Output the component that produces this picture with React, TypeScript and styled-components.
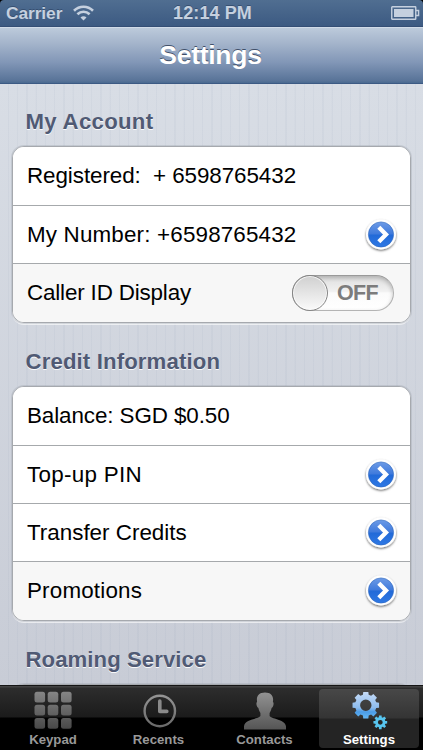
import React from "react";
import styled, { createGlobalStyle } from "styled-components";

const Global = createGlobalStyle`
  * { box-sizing: border-box; }
  body { margin: 0; background: #000; font-family: "Liberation Sans", Arial, Helvetica, sans-serif; }
`;

const Screen = styled.div`
  width: 423px;
  height: 750px;
  display: flex;
  flex-direction: column;
  overflow: hidden;
  background: #000;
`;

const StatusBar = styled.header`
  flex: none;
  height: 27px;
  display: grid;
  grid-template-columns: 1fr auto 1fr;
  align-items: center;
  padding: 0 4px 1px 6px;
  border-radius: 4px 4px 0 0;
  background: linear-gradient(#506e91, #3c5a82);
  border-bottom: 1px solid #344e75;
  color: #c5d0df;
  font-size: 18px;
  font-weight: bold;
  line-height: 24px;
  text-shadow: 0 -1px 0 rgba(30, 50, 80, 0.45);
`;

const Carrier = styled.div`
  display: flex;
  align-items: center;
  gap: 11px;
  font-size: 17.4px;
  letter-spacing: -0.1px;
`;

const Clock = styled.div`
  letter-spacing: 0.1px;
`;

const BatterySlot = styled.div`
  display: flex;
  justify-content: flex-end;
  margin-right: -1px;
`;

const NavBar = styled.div`
  flex: none;
  height: 57px;
  border-top: 1px solid #d0dbe8;
  border-bottom: 1px solid #3c5a84;
  background: linear-gradient(#bccadb 0%, #a4b4cb 28%, #8297b7 62%, #587398 96%, #496990 100%);
  display: flex;
  align-items: center;
  justify-content: center;
`;

const Title = styled.h1`
  margin: 0;
  padding: 0 2px 2px 0;
  font-size: 26.6px;
  line-height: 54px;
  color: #fff;
  letter-spacing: -0.3px;
  text-shadow: 0 -1px 0 rgba(40, 55, 80, 0.8);
`;

const Content = styled.main`
  flex: 1;
  min-height: 0;
  overflow: hidden;
  padding: 0 12px;
  background:
    repeating-linear-gradient(90deg, transparent 0 7.6px, rgba(110,130,160,0.06) 8px 9px, transparent 9.25px),
    linear-gradient(#d8dde5, #c8ccd6);
`;

const SectionTitle = styled.h2<{ $h: number; $track: number }>`
  margin: 0;
  height: ${(p) => p.$h}px;
  padding: 0 0 0 13.5px;
  display: flex;
  align-items: flex-end;
  font-size: 22.2px;
  line-height: 48px;
  letter-spacing: ${(p) => p.$track}px;
  color: #505a74;
  text-shadow: 0 1px 0 rgba(255, 255, 255, 0.9);
`;

const Card = styled.section`
  border: 1px solid #a6a9ae;
  border-radius: 12px;
  background: #fff;
  overflow: hidden;
  box-shadow: 0 0 0 1px rgba(150, 155, 165, 0.3), 0 2px 0 rgba(255, 255, 255, 0.6);
`;

const Row = styled.div<{ $tint?: boolean }>`
  height: 58px;
  padding: 0 11px 0 14px;
  display: flex;
  align-items: center;
  justify-content: space-between;
  background: ${(p) => (p.$tint ? "#f7f7f7" : "#fff")};
  font-size: 22.4px;
  color: #000;
  white-space: pre;
  & + & { border-top: 1px solid #a6a9ac; }
  &:last-child { height: 59px; }
`;

const Label = styled.span<{ $track?: number }>`
  letter-spacing: ${(p) => p.$track ?? 0}px;
`;

const Switch = styled.div`
  width: 102px;
  height: 36px;
  margin-right: 5px;
  border-radius: 18px;
  border: 1px solid #9a9a9a;
  border-right-color: #b0b0b0;
  border-bottom-color: #b4b4b4;
  background: linear-gradient(#dedede, #f1f1f1 45%, #fbfbfb 50%, #fff);
  box-shadow: inset 0 2px 4px rgba(0, 0, 0, 0.22);
  display: flex;
  align-items: center;
  gap: 9px;
  color: #7c7c7c;
  font-size: 21.5px;
  font-weight: bold;
  letter-spacing: -0.7px;
`;

const Knob = styled.span`
  width: 36px;
  height: 36px;
  flex: none;
  margin-left: -1px;
  border-radius: 50%;
  border: 1px solid #858585;
  background: linear-gradient(#d0d0d0, #fafafa);
  box-shadow: inset 0 0 0 1px rgba(255, 255, 255, 0.7);
`;

const TabBar = styled.nav`
  flex: none;
  height: 65px;
  display: grid;
  grid-template-columns: 106px 105px 107px 1fr;
  border-top: 1px solid #151515;
  background: linear-gradient(#434343 0, #434343 1px, #2d2d2d 2px, #1b1b1b 31px, #000 32px);
`;

const Tab = styled.div<{ $active?: boolean }>`
  margin: ${(p) => (p.$active ? "3px 4px 3px 1px" : "3px 0 3px")};
  border-radius: 4px;
  display: flex;
  flex-direction: column;
  align-items: center;
  background: ${(p) => (p.$active ? "linear-gradient(#484848, #343434 29px, #242424 30px, #242424)" : "none")};
  color: ${(p) => (p.$active ? "#fff" : "#999")};
  font-size: 13.2px;
  font-weight: bold;
  line-height: 16px;
  padding-top: 1px;
  svg { flex: none; }
`;

const Wifi = () => (
  <svg width="21" height="16" viewBox="0 0 21 16" fill="none" stroke="#c5d0df" strokeWidth="2.6">
    <path d="M1 5.7C6.4.4 14.6.4 20 5.7" />
    <path d="M4.4 9.3c3.5-3.4 8.7-3.4 12.2 0" />
    <path d="M10.5 15.5l-3-3.1c1.8-1.7 4.2-1.7 6 0z" fill="#c5d0df" stroke="none" />
  </svg>
);

const Battery = () => (
  <svg width="29" height="14" viewBox="0 0 29 14">
    <rect x=".75" y=".75" width="24" height="12.5" rx=".6" fill="none" stroke="#c5d0df" strokeWidth="1.4" />
    <rect x="3" y="3" width="19.5" height="8" fill="#c5d0df" />
    <path d="M25 4.5h2.6v5H25" fill="none" stroke="#c5d0df" strokeWidth="1.4" />
  </svg>
);

const Disclosure = () => (
  <svg width="36" height="38" viewBox="0 0 36 38">
    <defs>
      <linearGradient id="blueDisc" x1="0" y1="0" x2="0" y2="1">
        <stop offset="0" stopColor="#6d9be6" />
        <stop offset=".48" stopColor="#3f7adc" />
        <stop offset=".52" stopColor="#226ad8" />
        <stop offset="1" stopColor="#2e78e4" />
      </linearGradient>
      <filter id="discShadow" x="-20%" y="-20%" width="140%" height="150%">
        <feDropShadow dx="0" dy="1.2" stdDeviation="1.2" floodColor="#000" floodOpacity=".6" />
      </filter>
    </defs>
    <circle cx="18" cy="18.5" r="15" fill="#fff" filter="url(#discShadow)" />
    <circle cx="18" cy="18.5" r="12.6" fill="url(#blueDisc)" stroke="#3269bd" strokeWidth=".6" />
    <path d="M15.8 11.2l7.2 7.3-7.2 7.3" fill="none" stroke="#fff" strokeWidth="4.3" />
  </svg>
);

const KeypadIcon = () => (
  <svg width="40" height="42" viewBox="0 0 40 42">
    <defs>
      <linearGradient id="keys" gradientUnits="userSpaceOnUse" x1="0" y1="2" x2="0" y2="39">
        <stop offset="0" stopColor="#858585" />
        <stop offset="1" stopColor="#484848" />
      </linearGradient>
    </defs>
    {[1.7, 14.8, 28].map((y) =>
      [1.5, 14.7, 28].map((x) => <rect key={`${x}-${y}`} x={x} y={y} width="10.6" height="10.8" rx="2.5" fill="url(#keys)" />)
    )}
  </svg>
);

const RecentsIcon = () => (
  <svg width="40" height="42" viewBox="0 0 40 42" fill="none">
    <defs>
      <linearGradient id="clock" gradientUnits="userSpaceOnUse" x1="0" y1="4" x2="0" y2="38">
        <stop offset="0" stopColor="#969696" />
        <stop offset="1" stopColor="#686868" />
      </linearGradient>
    </defs>
    <circle cx="20.8" cy="21" r="15.2" stroke="url(#clock)" strokeWidth="2.4" />
    <path d="M20.8 11v10.4h7" stroke="#8a8a8a" strokeWidth="3.6" strokeLinecap="round" strokeLinejoin="round" />
  </svg>
);

const ContactsIcon = () => (
  <svg width="44" height="42" viewBox="0 0 44 42">
    <defs>
      <linearGradient id="person" x1="0" y1="0" x2="0" y2="1">
        <stop offset="0" stopColor="#929292" />
        <stop offset="1" stopColor="#555" />
      </linearGradient>
    </defs>
    <path
      d="M22 2.5c5.6 0 8.3 3 8.1 7.5 0 .8-.2 1.3-.2 2 1.1.5.8 3-.1 4.7-.4.8-.8.9-1.2 1.4-.5 2.1-1 3.4-2 4.800v3c3.500 3.600 16 3.400 16.400 10.600V39.500H1v-3c.4-7.200 12.900-7 16.400-10.600v-3c-1-1.400-1.500-2.700-2-4.800-.4-.5-.8-.6-1.200-1.400-.9-1.700-1.200-4.200-.1-4.700 0-.7-.2-1.200-.2-2C13.700 5.500 16.400 2.500 22 2.500z"
      fill="url(#person)"
    />
  </svg>
);

const gearPath = (cx: number, cy: number, outer: number, inner: number, hole: number) => {
  const points: string[] = [];
  for (let i = 0; i < 8; i++) {
    const center = (i * Math.PI) / 4;
    [[-0.27, inner], [-0.19, outer], [0.19, outer], [0.27, inner]].forEach(([a, r]) => {
      points.push(`${(cx + r * Math.sin(center + a)).toFixed(2)} ${(cy - r * Math.cos(center + a)).toFixed(2)}`);
    });
  }
  return `M${points.join("L")}Z M${cx - hole} ${cy}a${hole} ${hole} 0 1 0 ${hole * 2} 0a${hole} ${hole} 0 1 0 ${-hole * 2} 0Z`;
};

const SettingsIcon = () => (
  <svg width="44" height="42" viewBox="0 0 44 42">
    <defs>
      <linearGradient id="bigGear" x1="0" y1="0" x2="0" y2="1">
        <stop offset="0" stopColor="#c5dbf7" />
        <stop offset=".6" stopColor="#8dbbed" />
        <stop offset=".75" stopColor="#4b9ce6" />
        <stop offset="1" stopColor="#65b8f5" />
      </linearGradient>
    </defs>
    <path d={gearPath(18.8, 15.2, 13.5, 10.8, 5.7)} fill="url(#bigGear)" fillRule="evenodd" />
    <path d={gearPath(33.3, 32.3, 7, 5.2, 2.4)} fill="#57c5ef" fillRule="evenodd" />
  </svg>
);

export default function App() {
  return (
    <Screen>
      <Global />
      <StatusBar>
        <Carrier>Carrier<Wifi /></Carrier>
        <Clock>12:14 PM</Clock>
        <BatterySlot><Battery /></BatterySlot>
      </StatusBar>
      <NavBar><Title>Settings</Title></NavBar>
      <Content>
        <SectionTitle $h={62} $track={0.3}>My Account</SectionTitle>
        <Card>
          <Row><Label $track={-0.07}>{"Registered:  + 6598765432"}</Label></Row>
          <Row><Label $track={0.17}>My Number: +6598765432</Label><Disclosure /></Row>
          <Row $tint><Label $track={-0.16}>Caller ID Display</Label><Switch><Knob />OFF</Switch></Row>
        </Card>
        <SectionTitle $h={63} $track={0.13}>Credit Information</SectionTitle>
        <Card>
          <Row><Label $track={-0.09}>Balance: SGD $0.50</Label></Row>
          <Row><Label $track={0.3}>Top-up PIN</Label><Disclosure /></Row>
          <Row><Label>Transfer Credits</Label><Disclosure /></Row>
          <Row $tint><Label $track={0.18}>Promotions</Label><Disclosure /></Row>
        </Card>
        <SectionTitle $h={63} $track={0.05}>Roaming Service</SectionTitle>
        <Card><Row /></Card>
      </Content>
      <TabBar>
        <Tab><KeypadIcon />Keypad</Tab>
        <Tab><RecentsIcon />Recents</Tab>
        <Tab><ContactsIcon />Contacts</Tab>
        <Tab $active><SettingsIcon />Settings</Tab>
      </TabBar>
    </Screen>
  );
}
